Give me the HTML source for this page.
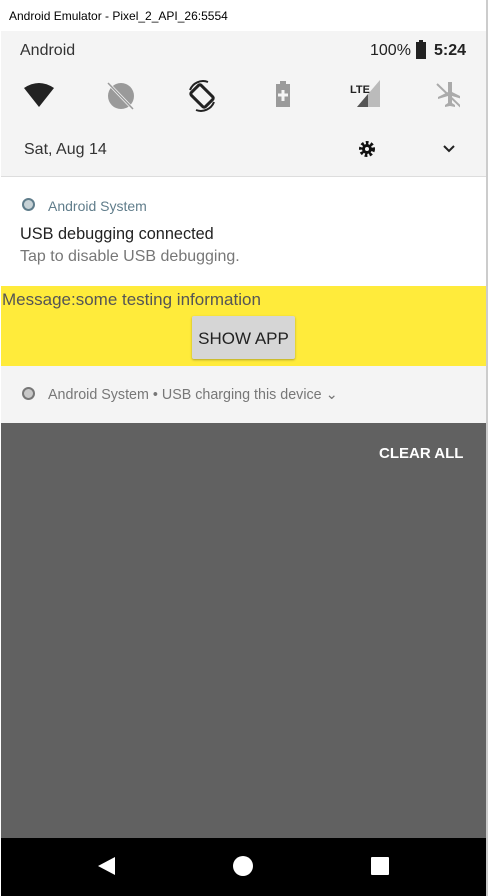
<!DOCTYPE html><html><head><style>
body{margin:0;width:488px;height:896px;position:relative;overflow:hidden;font-family:"Liberation Sans",sans-serif;background:#fff}
.a{position:absolute}
</style></head><body>
<div class="a" style="left:0;top:0;width:488px;height:31px;background:#fff;font-size:12px;color:#000"><span class="a" style="left:9px;top:9px">Android Emulator - Pixel_2_API_26:5554</span></div>
<div class="a" style="left:1px;top:31px;width:485px;height:145px;background:#f4f4f4"></div>
<div class="a" style="left:20px;top:42px;font-size:16px;color:#333">Android</div>
<div class="a" style="left:370px;top:42px;font-size:16px;color:#222">100%</div>
<div class="a" style="left:416px;top:42px;width:10px;height:17px;background:#222"></div>
<div class="a" style="left:419px;top:40px;width:4px;height:3px;background:#222"></div>
<div class="a" style="left:434px;top:42px;font-size:16px;color:#222;font-weight:bold">5:24</div>
<svg class="a" style="left:20px;top:80px" width="440" height="34">
<path d="M4 8 Q19 -2 34 8 L19 27Z" fill="#222"/>
<circle cx="101" cy="16" r="13" fill="#9a9a9a"/><line x1="88" y1="3" x2="113" y2="29" stroke="#f4f4f4" stroke-width="3"/><line x1="88" y1="3" x2="113" y2="29" stroke="#9a9a9a" stroke-width="1.5"/>
<rect x="175" y="6" width="14" height="20" rx="2" transform="rotate(-45 182 16)" fill="none" stroke="#222" stroke-width="3"/>
<path d="M170 10 A14 14 0 0 1 188 2 M194 22 A14 14 0 0 1 176 30" fill="none" stroke="#222" stroke-width="2"/>
<rect x="256" y="4" width="14" height="23" fill="#9a9a9a"/><rect x="260" y="1" width="6" height="3" fill="#9a9a9a"/><path d="M263 10v11M258 15h10" stroke="#f4f4f4" stroke-width="3"/>
<text x="330" y="13" font-size="11" font-weight="bold" fill="#222" font-family="Liberation Sans">LTE</text>
<path d="M360 0 L360 27 L337 27Z" fill="#bbb"/><path d="M348 14 L348 27 L337 27Z" fill="#555"/>
<path d="M428 2 v10 l-10 5 v2 l10-3 v7 l-3 2 v2 l5-1 5 1 v-2 l-3-2 v-7 l10 3 v-2 l-10-5 v-10z" fill="#aaa"/><line x1="417" y1="4" x2="442" y2="28" stroke="#aaa" stroke-width="2"/>
</svg>
<div class="a" style="left:24px;top:141px;font-size:16px;color:#333">Sat, Aug 14</div>
<svg class="a" style="left:358px;top:140px" width="18" height="18"><circle cx="9" cy="9" r="6" fill="none" stroke="#111" stroke-width="4" stroke-dasharray="2.5 2"/><circle cx="9" cy="9" r="5" fill="#111"/><circle cx="9" cy="9" r="2" fill="#f4f4f4"/></svg>
<svg class="a" style="left:442px;top:144px" width="14" height="10"><path d="M2 2 L7 7 L12 2" fill="none" stroke="#222" stroke-width="2"/></svg>
<div class="a" style="left:1px;top:176px;width:485px;height:1px;background:#ddd"></div>
<div class="a" style="left:1px;top:177px;width:485px;height:109px;background:#fff"></div>
<div class="a" style="left:22px;top:198px;width:13px;height:13px;border-radius:50%;background:#c7d2d6;box-sizing:border-box;border:2px solid #607d8b"></div>
<div class="a" style="left:48px;top:198px;font-size:14px;color:#607d8b">Android System</div>
<div class="a" style="left:20px;top:225px;font-size:16.3px;color:#222">USB debugging connected</div>
<div class="a" style="left:20px;top:248px;font-size:16px;color:#777">Tap to disable USB debugging.</div>
<div class="a" style="left:1px;top:286px;width:485px;height:80px;background:#ffeb3b"></div>
<div class="a" style="left:2px;top:290px;font-size:17px;color:#555">Message:some testing information</div>
<div class="a" style="left:192px;top:316px;width:103px;height:43px;background:#d6d6d6;box-shadow:0 1px 2px rgba(0,0,0,.3);border-radius:2px;font-size:17px;color:#222;line-height:45px;text-align:center">SHOW APP</div>
<div class="a" style="left:1px;top:366px;width:485px;height:57px;background:#f4f4f4"></div>
<div class="a" style="left:22px;top:387px;width:13px;height:13px;border-radius:50%;background:#c8c8c8;box-sizing:border-box;border:2px solid #777"></div>
<div class="a" style="left:48px;top:387px;font-size:14.3px;color:#777">Android System • USB charging this device ⌄</div>
<div class="a" style="left:1px;top:423px;width:485px;height:415px;background:#616161"></div>
<div class="a" style="left:379px;top:445px;font-size:15px;color:#fff;font-weight:bold">CLEAR ALL</div>
<div class="a" style="left:1px;top:838px;width:485px;height:58px;background:#000"></div>
<svg class="a" style="left:90px;top:852px" width="310" height="28"><path d="M8 14 L25 5 L25 23Z" fill="#fff"/><circle cx="153" cy="14" r="10" fill="#fff"/><rect x="281" y="5" width="18" height="18" rx="1" fill="#fff"/></svg>
<div class="a" style="left:486px;top:0;width:2px;height:896px;background:#ccc"></div>
</body></html>
